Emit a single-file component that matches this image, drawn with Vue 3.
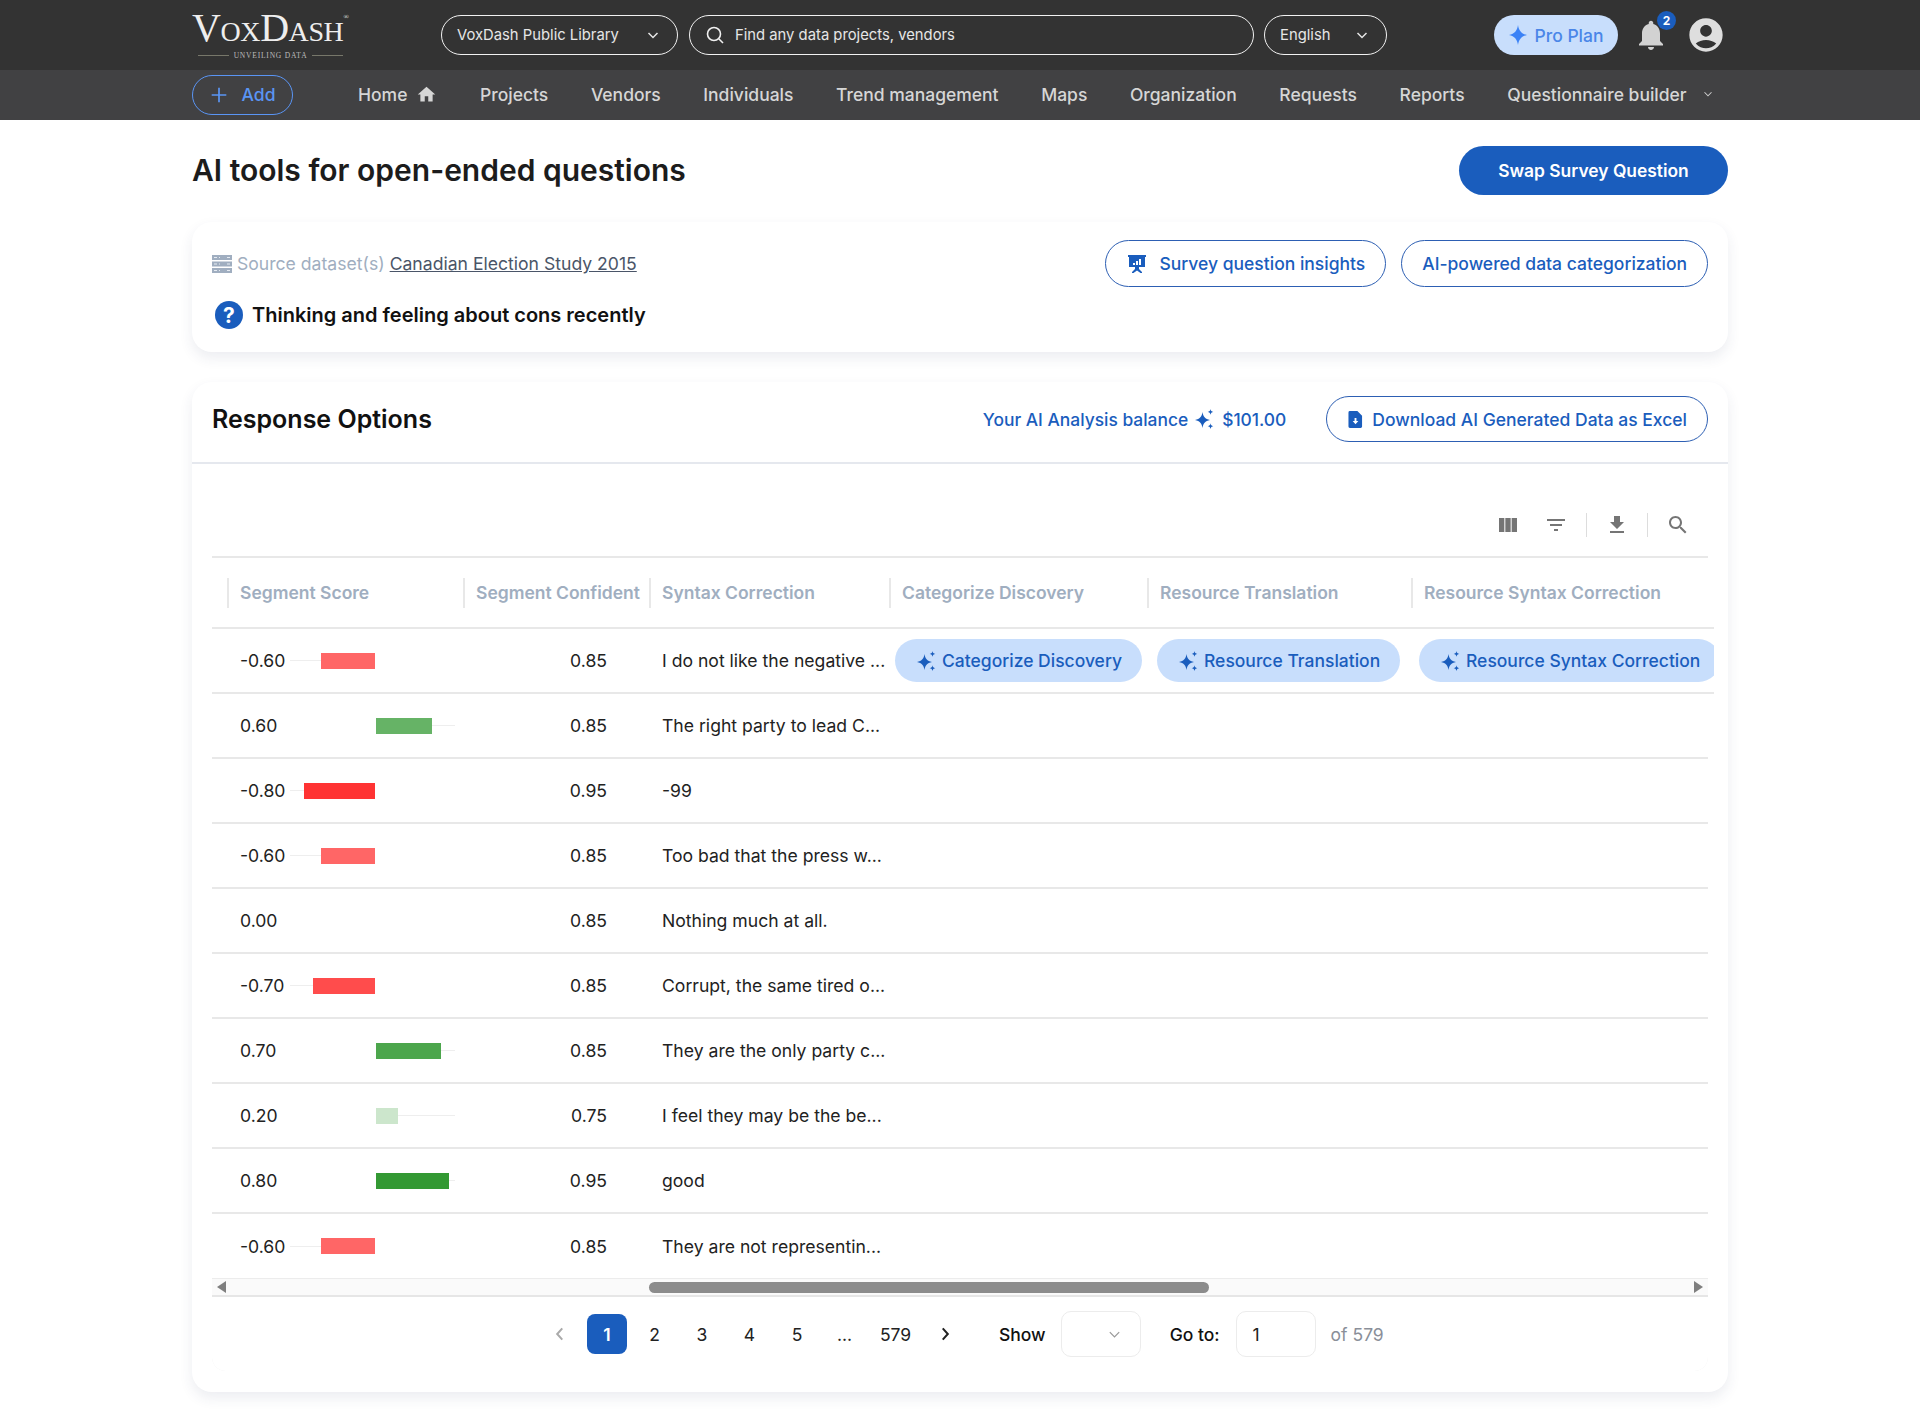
<template>
  <div class="page">
    <header class="topbar">
      <div class="logo">
        <div class="logo-name">VoxDash<span class="logo-reg">®</span></div>
        <div class="logo-tag"><i></i><span>UNVEILING DATA</span><i></i></div>
      </div>
      <div class="top-pill library">
        <span>VoxDash Public Library</span>
        <svg class="chev" viewBox="0 0 16 16"><path d="M3.5 6l4.5 4.5L12.5 6" /></svg>
      </div>
      <div class="top-pill search">
        <svg class="search-icon" viewBox="0 0 20 20"><circle cx="9" cy="9" r="6.5" /><path d="M14 14l4 4" /></svg>
        <span>Find any data projects, vendors</span>
      </div>
      <div class="top-pill lang">
        <span>English</span>
        <svg class="chev" viewBox="0 0 16 16"><path d="M3.5 6l4.5 4.5L12.5 6" /></svg>
      </div>
      <div class="pro-plan">
        <svg viewBox="0 0 20 20" class="pro-star"><path d="M10 0c.8 5.6 3.4 8.9 9 10-5.6 1.100-8.200 4.400-9 10-.8-5.600-3.400-8.900-9-10 5.600-1.100 8.200-4.400 9-10z" /></svg>
        Pro Plan
      </div>
      <div class="bell">
        <svg viewBox="0 0 24 24"><path d="M12 22c1.100 0 2-.9 2-2h-4c0 1.100.89 2 2 2zm6-6v-5c0-3.070-1.640-5.640-4.500-6.320V4c0-.83-.67-1.500-1.500-1.500s-1.500.67-1.500 1.500v.68C7.630 5.360 6 7.920 6 11v5l-2 2v1h16v-1l-2-2z" /></svg>
        <span class="badge">2</span>
      </div>
      <svg class="avatar" viewBox="0 0 24 24"><path d="M12 2C6.480 2 2 6.480 2 12s4.480 10 10 10 10-4.480 10-10S17.520 2 12 2zm0 4c1.930 0 3.500 1.570 3.500 3.500S13.930 13 12 13s-3.500-1.570-3.500-3.500S10.070 6 12 6zm0 14c-2.030 0-4.430-.82-6.140-2.880C7.550 15.800 9.680 15 12 15s4.450.8 6.140 2.120C16.430 19.180 14.030 20 12 20z" /></svg>
    </header>

    <nav class="subnav">
      <div class="add-btn">
        <svg viewBox="0 0 16 16"><path d="M8 1.500v13M1.500 8h13" /></svg>
        <span>Add</span>
      </div>
      <div class="nav-items">
        <span class="nav-item">
          Home
          <svg class="home-icon" viewBox="0 0 24 24"><path d="M10 20v-6h4v6h5v-8h3L12 3 2 12h3v8z" /></svg>
        </span>
        <span v-for="item in navItems" :key="item" class="nav-item">{{ item }}</span>
        <span class="nav-item">
          Questionnaire builder
          <svg class="nav-chev" viewBox="0 0 16 16"><path d="M4 6l4 4 4-4" /></svg>
        </span>
      </div>
    </nav>

    <main class="content">
      <div class="title-row">
        <h1>AI tools for open-ended questions</h1>
        <button class="swap-btn">Swap Survey Question</button>
      </div>

      <section class="card info-card">
        <div class="info-top">
          <div class="source">
            <svg class="source-icon" viewBox="0 0 20 20">
              <path d="M0 1h20v5H0zM0 7.500h20v5H0zM0 14h20v5H0z" />
              <path class="source-dots" d="M2 3h3v1H2zM7 3h1v1H7zM2 9.500h3v1H2zM7 9.500h1v1H7zM2 16h3v1H2zM7 16h1v1H7zM15 3h3v1h-3zM15 9.500h3v1h-3zM15 16h3v1h-3z" />
            </svg>
            <span>Source dataset(s)</span>
            <a class="source-link">Canadian Election Study 2015</a>
          </div>
          <div class="info-actions">
            <button class="outline-btn insights-btn">
              <svg viewBox="0 0 20 20" class="insights-icon">
                <path class="fill" d="M1 1h18v2h-1v10h-6v2l3 3v1h-1.500L10 16.500 6.500 19H5v-1l3-3v-2H2V3H1z" />
                <path class="bars" d="M6 9h2v2H6zM9 7h2v4H9zM12 5h2v6h-2z" />
              </svg>
              Survey question insights
            </button>
            <button class="outline-btn">AI-powered data categorization</button>
          </div>
        </div>
        <div class="question">
          <span class="question-mark">?</span>
          Thinking and feeling about cons recently
        </div>
      </section>

      <section class="card options-card">
        <div class="options-head">
          <h2>Response Options</h2>
          <div class="balance">
            Your AI Analysis balance
            <svg class="sparkle" viewBox="0 0 20 20"><path :d="sparklePath" /></svg>
            $101.00
          </div>
          <button class="outline-btn download-btn">
            <svg viewBox="0 0 16 20" class="file-icon">
              <path class="fill" d="M2 1h8l5 5v11.500a1.500 1.500 0 0 1-1.500 1.500h-11.500A1.500 1.500 0 0 1 .5 17.500V2.500A1.500 1.500 0 0 1 2 1z" />
              <path class="arrow" d="M7 8.500h2v3h2l-3 3.500-3-3.500h2z" />
            </svg>
            Download AI Generated Data as Excel
          </button>
        </div>

        <div class="table-back">
          <div class="table-wrap">
            <div class="toolbar">
              <svg viewBox="0 0 24 24" class="tool-first"><path d="M14.670 5v14H9.330V5h5.340zm1 14H21V5h-5.330v14zm-7.340 0V5H3v14h5.330z" /></svg>
              <svg viewBox="0 0 24 24"><path d="M10 18h4v-2h-4v2zM3 6v2h18V6H3zm3 7h12v-2H6v2z" /></svg>
              <i class="tool-sep"></i>
              <svg viewBox="0 0 24 24"><path d="M19 9h-4V3H9v6H5l7 7 7-7zM5 18v2h14v-2H5z" /></svg>
              <i class="tool-sep"></i>
              <svg viewBox="0 0 24 24"><path d="M15.500 14h-.79l-.28-.27C15.410 12.590 16 11.110 16 9.500 16 5.910 13.090 3 9.500 3S3 5.910 3 9.500 5.910 16 9.500 16c1.610 0 3.090-.59 4.230-1.570l.27.28v.79l5 4.990L20.490 19l-4.990-5zm-6 0C7.010 14 5 11.990 5 9.500S7.010 5 9.500 5 14 7.010 14 9.500 11.990 14 9.500 14z" /></svg>
            </div>

            <div class="table-row table-head">
              <div v-for="col in columns" :key="col" class="head-cell"><span>{{ col }}</span></div>
            </div>

            <div v-for="(row, i) in rows" :key="i" class="table-row body-row" :class="{ 'first-row': i === 0 }">
              <div class="score-cell">
                <span class="score-label">{{ row.score.toFixed(2) }}</span>
                <div class="score-bar">
                  <div class="half neg">
                    <i v-if="row.score < 0" class="track"></i>
                    <i v-if="row.score < 0" class="bar" :style="barStyle(row.score)"></i>
                  </div>
                  <div class="half pos">
                    <i v-if="row.score > 0" class="bar" :style="barStyle(row.score)"></i>
                    <i v-if="row.score > 0" class="track"></i>
                  </div>
                </div>
              </div>
              <div class="conf-cell">{{ row.conf }}</div>
              <div class="text-cell">{{ row.text }}</div>
              <template v-if="i === 0">
                <div v-for="pill in pills" :key="pill" class="pill-cell">
                  <span class="ai-pill">
                    <svg class="sparkle" viewBox="0 0 20 20"><path :d="sparklePath" /></svg>
                    {{ pill }}
                  </span>
                </div>
              </template>
            </div>

            <div class="scrollbar">
              <i class="arrow-left"></i>
              <div class="scroll-track"><div class="scroll-thumb"></div></div>
              <i class="arrow-right"></i>
            </div>

            <div class="pagination">
              <svg class="page-arrow muted" viewBox="0 0 16 16"><path d="M10 3L5.500 8l4.500 5" /></svg>
              <span
                v-for="p in pages"
                :key="p"
                class="page-num"
                :class="{ active: p === '1', wide: p === '579' }"
              >{{ p }}</span>
              <svg class="page-arrow" viewBox="0 0 16 16"><path d="M6 3l4.500 5L6 13" /></svg>
              <span class="show-label">Show</span>
              <div class="page-box show-box">
                <svg class="box-chev" viewBox="0 0 16 16"><path d="M3 5.500l5 5 5-5" /></svg>
              </div>
              <span class="goto-label">Go to:</span>
              <div class="page-box goto-box">1</div>
              <span class="of-label">of 579</span>
            </div>
          </div>
        </div>
      </section>
    </main>
  </div>
</template>

<script setup>
  const navItems = [
    'Projects',
    'Vendors',
    'Individuals',
    'Trend management',
    'Maps',
    'Organization',
    'Requests',
    'Reports',
  ];

  const columns = [
    'Segment Score',
    'Segment Confident',
    'Syntax Correction',
    'Categorize Discovery',
    'Resource Translation',
    'Resource Syntax Correction',
  ];

  const pills = ['Categorize Discovery', 'Resource Translation', 'Resource Syntax Correction'];

  const rows = [
    { score: -0.6, conf: '0.85', text: 'I do not like the negative ...' },
    { score: 0.6, conf: '0.85', text: 'The right party to lead C...' },
    { score: -0.8, conf: '0.95', text: '-99' },
    { score: -0.6, conf: '0.85', text: 'Too bad that the press w...' },
    { score: 0, conf: '0.85', text: 'Nothing much at all.' },
    { score: -0.7, conf: '0.85', text: 'Corrupt, the same tired o...' },
    { score: 0.7, conf: '0.85', text: 'They are the only party c...' },
    { score: 0.2, conf: '0.75', text: 'I feel they may be the be...' },
    { score: 0.8, conf: '0.95', text: 'good' },
    { score: -0.6, conf: '0.85', text: 'They are not representin...' },
  ];

  const pages = ['1', '2', '3', '4', '5', '...', '579'];

  // big star plus two small ones
  const sparklePath =
    'M7.500 3c.6 4.500 2.600 7.100 7.500 8-4.900.9-6.900 3.500-7.500 8-.6-4.500-2.600-7.100-7.500-8 4.900-.9 6.900-3.500 7.500-8zM15.500 0c.3 1.800 1 2.600 2.800 2.900-1.800.3-2.500 1-2.800 2.800-.3-1.800-1-2.500-2.800-2.800 1.800-.3 2.500-1.100 2.800-2.900zM15.500 14.300c.3 1.800 1 2.600 2.800 2.900-1.800.3-2.500 1-2.800 2.800-.3-1.800-1-2.500-2.800-2.800 1.800-.3 2.500-1.100 2.800-2.900z';

  const barStyle = (score) => {
    const abs = Math.abs(score);
    const color = score < 0 ? '255, 0, 0' : '0, 128, 0';
    // the negative side is drawn a touch shorter than the positive one
    const width = score < 0 ? 3 + 85 * abs : 5 + 85 * abs;
    return {
      width: `${width}px`,
      background: `rgba(${color}, ${abs})`,
    };
  };
</script>

<style>
  html,
  body {
    margin: 0;
    background: #fff;
  }
</style>

<style scoped>
  .page {
    min-height: 1415px;
    font-family: Inter, 'Noto Sans', sans-serif;
    color: #1f1f1f;
    background: #fff;
  }

  button {
    font-family: inherit;
    cursor: pointer;
  }

  /* top bar */
  .topbar {
    height: 70px;
    background: #333333;
    display: flex;
    align-items: center;
    padding-left: 192px;
    box-sizing: border-box;
  }

  .logo {
    width: 249px;
    color: #eeeeee;
    font-family: 'Liberation Serif', serif;
  }

  .logo-name {
    font-size: 40px;
    line-height: 36px;
    font-variant: small-caps;
    letter-spacing: -0.4px;
    margin-top: -12px;
    white-space: nowrap;
  }

  .logo-reg {
    font-size: 7px;
    vertical-align: 22px;
  }

  .logo-tag {
    width: 145px;
    margin-left: 6px;
    display: flex;
    align-items: center;
    gap: 5px;
    font-size: 7.5px;
    letter-spacing: 0.8px;
    line-height: 8px;
    margin-top: 6px;
    color: #bdbdbd;
  }

  .logo-tag i {
    flex: 1;
    height: 1px;
    background: #77776a;
  }

  .top-pill {
    height: 40px;
    box-sizing: border-box;
    border: 1.5px solid #f2f2f2;
    border-radius: 22px;
    display: flex;
    align-items: center;
    color: #e6e6e6;
    font-size: 14.8px;
    padding: 0 16px 0 15px;
    justify-content: space-between;
  }

  .library {
    width: 237px;
  }

  .search {
    width: 565px;
    margin-left: 11px;
    justify-content: flex-start;
    gap: 10px;
  }

  .lang {
    width: 123px;
    margin-left: 10px;
  }

  .chev {
    width: 16px;
    height: 16px;
    fill: none;
    stroke: #e6e6e6;
    stroke-width: 1.5;
  }

  .search-icon {
    width: 20px;
    height: 20px;
    fill: none;
    stroke: #f0f0f0;
    stroke-width: 1.6;
  }

  .pro-plan {
    margin-left: 107px;
    width: 124px;
    height: 40px;
    border-radius: 20px;
    background: #c8defc;
    color: #4a86e8;
    font-size: 17.5px;
    font-weight: 500;
    display: flex;
    align-items: center;
    justify-content: center;
    gap: 6px;
  }

  .pro-star {
    width: 20px;
    height: 20px;
    fill: #3b82f6;
  }

  .bell {
    position: relative;
    width: 36px;
    height: 36px;
    margin-left: 15px;
  }

  .bell svg {
    width: 36px;
    height: 36px;
    fill: #d2d2d2;
  }

  .badge {
    position: absolute;
    top: -6px;
    right: -7px;
    width: 19px;
    height: 19px;
    border-radius: 50%;
    background: #1a5dbd;
    color: #fff;
    font-size: 12px;
    font-weight: 700;
    display: flex;
    align-items: center;
    justify-content: center;
  }

  .avatar {
    width: 40px;
    height: 40px;
    fill: #dedede;
    margin-left: 17px;
  }

  /* nav */
  .subnav {
    height: 50px;
    background: #414143;
    display: flex;
    align-items: center;
    padding-left: 192px;
    box-sizing: border-box;
  }

  .add-btn {
    width: 101px;
    height: 40px;
    box-sizing: border-box;
    border: 1.5px solid #5a95f5;
    border-radius: 21px;
    color: #5a95f5;
    font-size: 17.5px;
    font-weight: 500;
    display: flex;
    align-items: center;
    justify-content: center;
    gap: 14px;
  }

  .add-btn span {
    padding-bottom: 2px;
  }

  .add-btn svg {
    width: 18px;
    height: 18px;
    fill: none;
    stroke: #5a95f5;
    stroke-width: 1.5;
  }

  .nav-items {
    margin-left: 65px;
    padding-bottom: 2px;
    display: flex;
    gap: 42.6px;
  }

  .nav-item {
    display: flex;
    align-items: center;
    color: #d6d6d6;
    font-size: 17.5px;
    font-weight: 500;
    white-space: nowrap;
  }

  .home-icon {
    width: 21px;
    height: 21px;
    fill: #d6d6d6;
    margin-left: 9px;
  }

  .nav-chev {
    width: 14px;
    height: 14px;
    fill: none;
    stroke: #cfcfcf;
    stroke-width: 1.2;
    margin-left: 14px;
  }

  /* content */
  .content {
    width: 1536px;
    margin: 0 auto;
    padding-top: 26px;
  }

  .title-row {
    display: flex;
    align-items: center;
    justify-content: space-between;
    height: 49px;
  }

  h1 {
    margin: 0 0 2px;
    font-size: 30px;
    font-weight: 600;
    color: #1c1c1c;
  }

  .swap-btn {
    width: 269px;
    height: 49px;
    border: 0;
    border-radius: 25px;
    background: #1a5dbd;
    color: #fff;
    font-size: 17.4px;
    font-weight: 600;
  }

  .card {
    background: #fff;
    border-radius: 20px;
    box-shadow: 0 6px 14px rgba(40, 60, 100, 0.09);
  }

  .info-card {
    margin-top: 27px;
    height: 130px;
    box-sizing: border-box;
    padding: 18px 20px 0;
  }

  .info-top {
    display: flex;
    align-items: center;
    justify-content: space-between;
  }

  .source {
    display: flex;
    align-items: center;
    color: #a0aec0;
    font-size: 17.6px;
    gap: 5px;
  }

  .source-icon {
    width: 20px;
    height: 20px;
    fill: #a0aec0;
  }

  .source-dots {
    fill: #e6ebf2;
  }

  .source-link {
    color: #4a5568;
    text-decoration: underline;
  }

  .info-actions {
    display: flex;
    gap: 15px;
  }

  .outline-btn {
    height: 47px;
    padding: 0 20px;
    background: #fff;
    border: 1.5px solid #2d5fb3;
    border-radius: 24px;
    color: #1a5dbd;
    font-size: 17.5px;
    font-weight: 500;
    display: flex;
    align-items: center;
    gap: 12px;
    box-sizing: border-box;
  }

  .insights-btn {
    padding-left: 21px;
  }

  .insights-icon {
    width: 20px;
    height: 20px;
  }

  .insights-icon .fill,
  .file-icon .fill {
    fill: #1a5dbd;
  }

  .insights-icon .bars,
  .file-icon .arrow {
    fill: #fff;
  }

  .question {
    margin-top: 14px;
    margin-left: 3px;
    display: flex;
    align-items: center;
    gap: 9px;
    height: 28px;
    font-size: 20px;
    font-weight: 600;
    color: #111;
  }

  .question-mark {
    width: 28px;
    height: 28px;
    border-radius: 50%;
    background: #1a5dbd;
    color: #fff;
    font-size: 21px;
    font-weight: 700;
    display: flex;
    align-items: center;
    justify-content: center;
  }

  .options-card {
    margin-top: 30px;
    padding-bottom: 21px;
  }

  .options-head {
    height: 82px;
    box-sizing: border-box;
    padding: 0 20px 6px;
    display: flex;
    align-items: center;
    border-bottom: 2px solid #e5e8ee;
  }

  h2 {
    margin: 0;
    font-size: 25px;
    font-weight: 600;
    color: #111;
    flex: 1;
  }

  .balance {
    display: flex;
    align-items: center;
    gap: 7px;
    color: #1a5dbd;
    font-size: 17.4px;
    font-weight: 500;
  }

  .sparkle {
    width: 20px;
    height: 20px;
    fill: #1a5dbd;
    flex-shrink: 0;
  }

  .download-btn {
    height: 46px;
    margin-left: 40px;
    gap: 9px;
    padding-left: 21px;
  }

  .file-icon {
    width: 15px;
    height: 19px;
  }

  .table-back {
    margin: 0 20px;
    background: #efefef;
    border-radius: 0 0 14px 14px;
  }

  .table-wrap {
    background: #fff;
    border-radius: 0 0 14px 14px;
  }

  .toolbar {
    height: 94px;
    box-sizing: border-box;
    padding: 29px 18px 0 0;
    display: flex;
    align-items: center;
    justify-content: flex-end;
    gap: 18px;
    border-bottom: 2px solid #e8e8e8;
  }

  .toolbar svg {
    width: 24px;
    height: 24px;
    fill: #757575;
  }

  .tool-first {
    margin-right: 6px;
  }

  .tool-sep {
    width: 1px;
    height: 24px;
    background: #dddddd;
  }

  .table-row {
    display: grid;
    grid-template-columns: 252px 186px 240px 257px 265px 302px;
  }

  .table-head {
    height: 71px;
    box-sizing: border-box;
    align-items: center;
    border-bottom: 2px solid #e8e8e8;
    margin-right: -6px;
  }

  .head-cell {
    border-left: 2px solid #e8e8e8;
    height: 30px;
    margin-left: -1px;
    display: flex;
    align-items: center;
    padding-left: 11px;
    color: #a0aec0;
    font-size: 17.5px;
    font-weight: 600;
    white-space: nowrap;
  }

  .head-cell:first-child {
    margin-left: 15px;
  }

  .head-cell:nth-child(5) {
    margin-left: 0;
    padding-left: 11px;
  }

  .body-row {
    height: 65px;
    box-sizing: border-box;
    align-items: center;
    border-bottom: 2px solid #e8e8e8;
    font-size: 17.6px;
    color: #222;
  }

  .body-row:nth-last-child(3) {
    border-bottom: 0;
    height: 64px;
  }

  .first-row {
    margin-right: -6px;
  }

  .score-cell {
    display: flex;
    align-items: center;
    padding-left: 28px;
  }

  .score-label {
    width: 50px;
  }

  .score-bar {
    display: flex;
    height: 16px;
  }

  .half {
    display: flex;
    align-items: center;
  }

  .half.neg {
    width: 85px;
  }

  .half.pos {
    width: 79px;
    margin-left: 1px;
  }

  .track {
    flex: 1;
    height: 1px;
    background: #eeeeee;
  }

  .bar {
    height: 16px;
    display: block;
  }

  .conf-cell {
    text-align: right;
    padding-right: 43px;
  }

  .text-cell {
    padding-left: 12px;
    white-space: nowrap;
  }

  .pill-cell {
    padding-left: 5px;
    min-width: 0;
    overflow: hidden;
  }

  .ai-pill {
    height: 43px;
    box-sizing: border-box;
    padding: 0 20px 0 22px;
    border-radius: 22px;
    background: #c8defc;
    color: #1a5dbd;
    font-size: 17.5px;
    font-weight: 500;
    display: inline-flex;
    align-items: center;
    gap: 5px;
    white-space: nowrap;
  }

  .pill-cell:nth-child(4) {
    padding-left: 5px;
  }

  .pill-cell:nth-child(5) {
    padding-left: 10px;
  }

  .pill-cell:nth-child(6) {
    padding-left: 7px;
  }

  .scrollbar {
    height: 19px;
    box-sizing: border-box;
    background: #fafafa;
    border-top: 1px solid #ececec;
    border-bottom: 2px solid #e6e6e6;
    display: flex;
    align-items: center;
    padding: 0 5px;
  }

  .arrow-left,
  .arrow-right {
    width: 0;
    height: 0;
    border-top: 6px solid transparent;
    border-bottom: 6px solid transparent;
  }

  .arrow-left {
    border-right: 9px solid #7f7f7f;
  }

  .arrow-right {
    border-left: 9px solid #7f7f7f;
  }

  .scroll-track {
    flex: 1;
  }

  .scroll-thumb {
    width: 560px;
    height: 11px;
    margin-left: 423px;
    border-radius: 6px;
    background: #8c8c8c;
  }

  .pagination {
    height: 74px;
    display: flex;
    align-items: center;
    padding-left: 339px;
    font-size: 17.5px;
    color: #222;
  }

  .page-arrow {
    width: 18px;
    height: 18px;
    fill: none;
    stroke: #222;
    stroke-width: 1.8;
  }

  .page-arrow.muted {
    stroke: #aaaaaa;
    margin-right: 18px;
  }

  .page-num {
    min-width: 40px;
    height: 40px;
    margin-right: 7.500px;
    display: flex;
    align-items: center;
    justify-content: center;
    border-radius: 8px;
  }

  .page-num.wide {
    min-width: 47px;
    margin-right: 17px;
  }

  .page-num.active {
    background: #1a5dbd;
    color: #fff;
    font-weight: 600;
  }

  .show-label {
    margin-left: 45px;
    font-weight: 500;
    color: #111;
  }

  .page-box {
    width: 80px;
    height: 46px;
    box-sizing: border-box;
    border: 1.5px solid #ececec;
    border-radius: 10px;
    display: flex;
    align-items: center;
  }

  .show-box {
    margin-left: 15px;
    justify-content: flex-end;
    padding-right: 18px;
  }

  .box-chev {
    width: 15px;
    height: 15px;
    fill: none;
    stroke: #999;
    stroke-width: 1.3;
  }

  .goto-label {
    margin-left: 29px;
    font-weight: 500;
    color: #111;
  }

  .goto-box {
    margin-left: 16px;
    padding-left: 16px;
  }

  .of-label {
    margin-left: 15px;
    color: #8a8f99;
  }
</style>
